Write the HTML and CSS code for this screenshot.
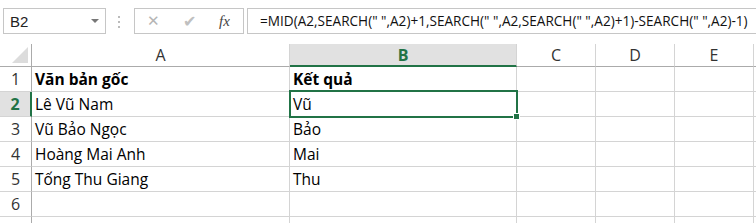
FILE: index.html
```html
<!DOCTYPE html>
<html lang="vi">
<head>
  <meta charset="UTF-8">
  <title>Trích từ ở giữa</title>
  <link rel="stylesheet" href="styles.css">
</head>
<body>

<div class="bar">
  <div class="namebox">
    <span>B2</span>
    <span class="caret"></span>
  </div>
  <div class="grip"></div>
  <div class="fxbox">
    <span class="cancel">&#x2715;</span>
    <span class="enter">&#x2714;</span>
    <span class="fx">fx</span>
  </div>
  <div class="formula">=MID(A2,SEARCH(" ",A2)+1,SEARCH(" ",A2,SEARCH(" ",A2)+1)-SEARCH(" ",A2)-1)</div>
</div>

<div class="sheet">
  <div class="corner"><span class="tri"></span></div>
  <div class="colhead">A</div>
  <div class="colhead active">B</div>
  <div class="colhead">C</div>
  <div class="colhead">D</div>
  <div class="colhead">E</div>
  <div class="colhead"></div>

  <div class="rowhead">1</div>
  <div class="cell bold">Văn bản gốc</div>
  <div class="cell bold">Kết quả</div>
  <div class="cell"></div><div class="cell"></div><div class="cell"></div><div class="cell"></div>

  <div class="rowhead active">2</div>
  <div class="cell">Lê Vũ Nam</div>
  <div class="cell selected">Vũ</div>
  <div class="cell"></div><div class="cell"></div><div class="cell"></div><div class="cell"></div>

  <div class="rowhead">3</div>
  <div class="cell">Vũ Bảo Ngọc</div>
  <div class="cell">Bảo</div>
  <div class="cell"></div><div class="cell"></div><div class="cell"></div><div class="cell"></div>

  <div class="rowhead">4</div>
  <div class="cell">Hoàng Mai Anh</div>
  <div class="cell">Mai</div>
  <div class="cell"></div><div class="cell"></div><div class="cell"></div><div class="cell"></div>

  <div class="rowhead">5</div>
  <div class="cell">Tống Thu Giang</div>
  <div class="cell">Thu</div>
  <div class="cell"></div><div class="cell"></div><div class="cell"></div><div class="cell"></div>

  <div class="rowhead">6</div>
  <div class="cell"></div><div class="cell"></div>
  <div class="cell"></div><div class="cell"></div><div class="cell"></div><div class="cell"></div>

  <div class="rowhead last"></div>
  <div class="cell last"></div><div class="cell last"></div>
  <div class="cell last"></div><div class="cell last"></div><div class="cell last"></div><div class="cell last"></div>
</div>

</body>
</html>
```

FILE: styles.css
```css
html, body {
  margin: 0;
  background: #fff;
  overflow: hidden;
}
body {
  font-family: "Open Sans", "Noto Sans", sans-serif;
  color: #000;
}

/* formula bar */
.bar {
  height: 44px;
  display: flex;
  align-items: flex-start;
  padding-top: 8px;
  box-sizing: border-box;
}
.namebox {
  margin-left: 3px;
  width: 103px;
  height: 26px;
  box-sizing: border-box;
  border: 1px solid #c6c6c6;
  display: flex;
  align-items: center;
  justify-content: space-between;
  padding: 0 6px 0 6px;
  font-family: "Liberation Sans", sans-serif;
  font-size: 15px;
  color: #222;
}
.caret {
  width: 0;
  height: 0;
  border-left: 4px solid transparent;
  border-right: 4px solid transparent;
  border-top: 4px solid #777;
}
.grip {
  width: 2px;
  height: 12px;
  margin: 8px 14px 0 12px;
  background: repeating-linear-gradient(#bbb 0 2px, transparent 2px 5px);
}
.fxbox {
  width: 110px;
  height: 26px;
  box-sizing: border-box;
  border: 1px solid #c6c6c6;
  display: flex;
  align-items: center;
  padding-left: 12px;
}
.cancel {
  color: #b5b5b5;
  font-size: 15px;
  width: 36px;
  font-family: "DejaVu Sans", sans-serif;
}
.enter {
  color: #c0c0c0;
  font-size: 16px;
  width: 36px;
  font-family: "DejaVu Sans", sans-serif;
}
.fx {
  font-family: "Liberation Serif", serif;
  font-style: italic;
  font-size: 15px;
  color: #444;
}
.formula {
  flex: 1;
  margin-left: 3px;
  height: 26px;
  box-sizing: border-box;
  border-top: 1px solid #c6c6c6;
  border-bottom: 1px solid #c6c6c6;
  border-left: 1px solid #c6c6c6;
  padding-left: 12px;
  line-height: 23px;
  font-size: 13.6px;
  white-space: nowrap;
  color: #111;
}

/* grid */
.sheet {
  display: grid;
  grid-template-columns: 32px 258px 227px 79px 79px 79px 1fr;
  grid-template-rows: 23px repeat(6, 25px) 6px;
}
.corner {
  border-right: 1px solid #ababab;
  border-bottom: 1px solid #ababab;
  position: relative;
}
.tri {
  position: absolute;
  right: 3px;
  bottom: 3px;
  width: 0;
  height: 0;
  border-left: 16px solid transparent;
  border-bottom: 16px solid #dcdcdc;
}
.colhead {
  border-right: 1px solid #d4d4d4;
  border-bottom: 1px solid #ababab;
  text-align: center;
  font-size: 16px;
  line-height: 22px;
  color: #333;
}
.colhead.active {
  background: #e1e1e1;
  border-bottom: 2px solid #217346;
  color: #217346;
  font-weight: bold;
}
.rowhead {
  border-right: 1px solid #ababab;
  border-bottom: 1px solid #d4d4d4;
  text-align: center;
  font-size: 16px;
  line-height: 24px;
  color: #333;
}
.rowhead.active {
  background: #e1e1e1;
  border-right: 2px solid #217346;
  color: #217346;
  font-weight: bold;
}
.cell {
  border-right: 1px solid #d4d4d4;
  border-bottom: 1px solid #d4d4d4;
  padding-left: 3px;
  font-size: 15.5px;
  line-height: 25px;
  white-space: nowrap;
}
.last {
  border-bottom: 0;
}
.bold {
  font-weight: bold;
}
.selected {
  position: relative;
}
.selected::after {
  content: "";
  position: absolute;
  top: -2px;
  left: -1px;
  right: -2px;
  bottom: -2px;
  border: 2px solid #217346;
}
.selected::before {
  content: "";
  position: absolute;
  right: -4px;
  bottom: -4px;
  width: 5px;
  height: 5px;
  background: #217346;
  border: 1px solid #fff;
  z-index: 1;
}
```
